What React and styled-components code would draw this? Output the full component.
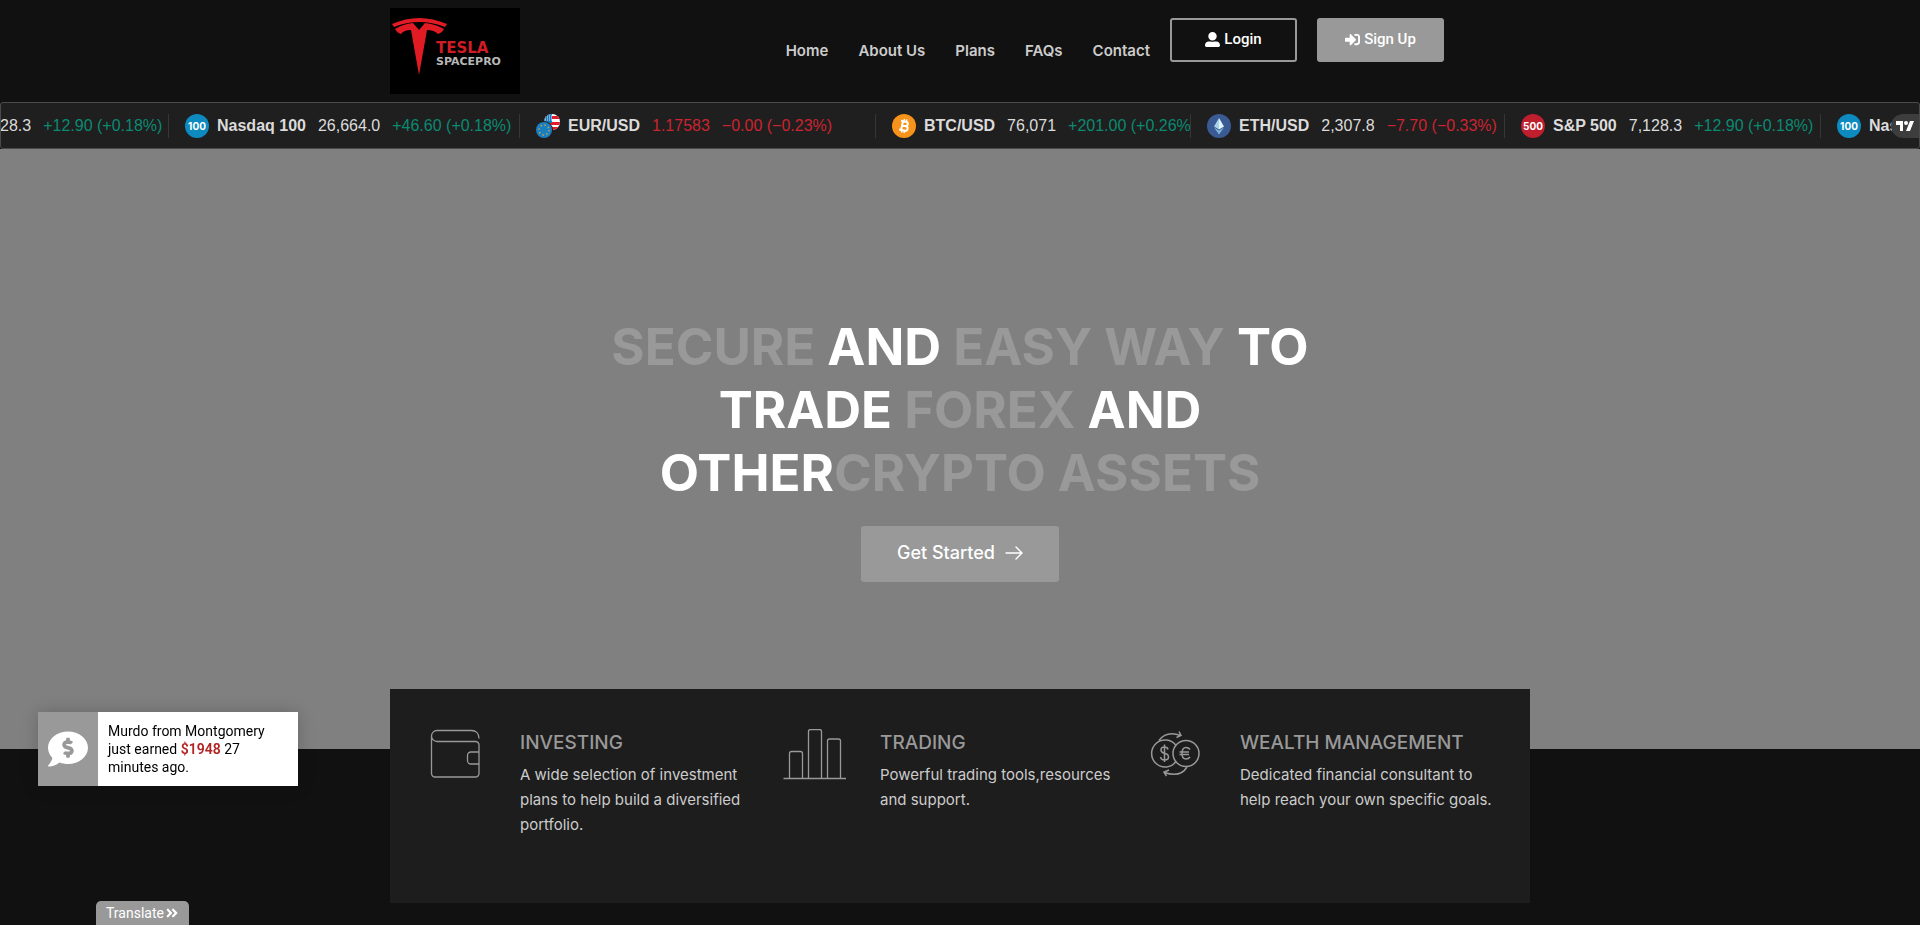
import React from 'react';
import styled, { createGlobalStyle } from 'styled-components';
import {
   FaUserAlt,
   FaSignInAlt,
   FaCommentDollar,
   FaAngleDoubleRight,
} from 'react-icons/fa';

const navLinks = ['Home', 'About Us', 'Plans', 'FAQs', 'Contact'];

const quotes = [
   { id: 'spx-1', icon: 'spx', name: 'S&P 500', price: '7,128.3', change: '+12.90 (+0.18%)', width: 315 },
   { id: 'ndx-1', icon: 'ndx', name: 'Nasdaq 100', price: '26,664.0', change: '+46.60 (+0.18%)', width: 351 },
   { id: 'eur', icon: 'eur', name: 'EUR/USD', price: '1.17583', change: '−0.00 (−0.23%)', width: 356, down: true, tinted: true },
   { id: 'btc', icon: 'btc', name: 'BTC/USD', price: '76,071', change: '+201.00 (+0.26%)', width: 315 },
   { id: 'eth', icon: 'eth', name: 'ETH/USD', price: '2,307.8', change: '−7.70 (−0.33%)', width: 314, down: true },
   { id: 'spx-2', icon: 'spx', name: 'S&P 500', price: '7,128.3', change: '+12.90 (+0.18%)', width: 316 },
   { id: 'ndx-2', icon: 'ndx', name: 'Nasdaq 100', price: '26,664.0', change: '+46.60 (+0.18%)', width: 351 },
];

const Logo = () => (
   <svg width='130' height='86' viewBox='0 0 130 86' role='img' aria-label='Tesla Spacepro'>
      <rect width='130' height='86' fill='#000' />
      <path fill='#e01b24' d='M2 16Q29 4 57 16L55 19Q29 9 4 19Z' />
      <path
         fill='#e01b24'
         d='M5 21Q13 16 23 15L29 22L35 15Q45 16 54 21Q52 25 48 26Q44 22 37 22L29 67L21 22Q14 22 11 26Q7 25 5 21Z'
      />
      <LogoText x='46' y='45' fill='#d01c24' $size={15}>TESLA</LogoText>
      <LogoText x='46' y='57' fill='#b8b8b8' $size={11}>SPACEPRO</LogoText>
   </svg>
);

const QuoteIcon = ({ type }) => {
   if (type === 'eur') {
      return (
         <CoinSvg width='24' height='24' viewBox='0 0 24 24' aria-hidden='true'>
            <defs>
               <clipPath id='usFlag'>
                  <circle cx='16' cy='8' r='8' />
               </clipPath>
            </defs>
            <g clipPath='url(#usFlag)'>
               <rect x='8' width='16' height='16' fill='#fff' />
               <path fill='#e01b2c' d='M8 2h16v3H8zM8 8h16v3H8zM8 13h16v3H8z' />
               <rect x='8' width='8' height='9' fill='#1779ba' />
               <path stroke='#cfe6f5' strokeDasharray='1 1' d='M9 2h7M9 4h7M9 6h7' />
            </g>
            <circle cx='8' cy='16' r='9' fill='#202020' />
            <circle cx='8' cy='16' r='8' fill='#1a7fc1' />
            <circle cx='8' cy='16' r='5' fill='none' stroke='#d9a33c' strokeWidth='1.4' strokeDasharray='1.4 2.5' />
         </CoinSvg>
      );
   }
   if (type === 'btc') {
      return (
         <CoinSvg width='24' height='24' viewBox='0 0 24 24' aria-hidden='true'>
            <circle cx='12' cy='12' r='12' fill='#f7931a' />
            <g fill='none' stroke='#fff' strokeWidth='2' transform='rotate(12 12 12)'>
               <path d='M8 7.5h5.2a2.1 2.1 0 0 1 0 4.3H9.8h4a2.3 2.3 0 0 1 0 4.7H8M10 7.5v9' />
               <path strokeWidth='1.4' d='M11 5v2.5M13.5 5v2.5M11 16.5v2.5M13.5 16.5v2.5' />
            </g>
         </CoinSvg>
      );
   }
   if (type === 'eth') {
      return (
         <CoinSvg width='24' height='24' viewBox='0 0 24 24' aria-hidden='true'>
            <circle cx='12' cy='12' r='12' fill='#3a5a94' />
            <path fill='#a9d3ea' d='M12 4L7 12.5L12 15.5Z' />
            <path fill='#e3f4fb' d='M12 4L17 12.5L12 15.5Z' />
            <path fill='#7fb3d5' d='M7 13.5L12 20.5L17 13.5L12 16.5Z' />
         </CoinSvg>
      );
   }
   return <RoundBadge $red={type === 'spx'}>{type === 'spx' ? '500' : '100'}</RoundBadge>;
};

const WalletIcon = () => (
   <svg width='50' height='50' viewBox='0 0 50 50' fill='none' stroke='#999' strokeWidth='1.3' aria-hidden='true'>
      <path d='M49 9.5C49 4.500 46 1.500 41.500 1.500H7A5.500 5.500 0 0 0 1.500 7V44.500A3.500 3.500 0 0 0 5 48H45.500A3.500 3.500 0 0 0 49 44.500V16A3.500 3.500 0 0 0 45.500 12.500H7A5.500 5.500 0 0 1 1.500 7' />
      <path d='M49 23H41A3.500 3.500 0 0 0 37.500 26.500V31.500A3.500 3.500 0 0 0 41 35H49' />
   </svg>
);

const BarsIcon = () => (
   <svg width='64' height='52' viewBox='0 1 64 52' fill='none' stroke='#999' strokeWidth='1.3' aria-hidden='true'>
      <path d='M0.5 50.5H63' />
      <path d='M6.5 50.5V25.5Q6.5 23.5 8.5 23.5H17.5Q19.5 23.5 19.5 25.5V50.5' />
      <path d='M25.5 50.5V3.5Q25.5 1.5 27.5 1.5H36.5Q38.5 1.5 38.5 3.5V50.5' />
      <path d='M44.5 50.5V13Q44.5 11 46.5 11H55.5Q57.5 11 57.5 13V50.5' />
   </svg>
);

const CoinsIcon = () => (
   <svg width='50' height='50' viewBox='0 0 50 50' fill='none' stroke='#999' strokeWidth='1.5' aria-hidden='true'>
      <circle cx='36' cy='24.5' r='13' />
      <path d='M26 16.5A13.5 13.500 0 1 0 26 32.500' />
      <path d='M9 11.5Q16.500 1.500 30.500 6.500M29 2.500L31 6.500L26.500 8.500' />
      <path d='M37 38Q30.500 49 14.500 43.500M19 41L14 43L16.500 47' />
      <path d='M18 20.5Q17.500 18 14.500 18Q11 18 11 21Q11 23.500 14.500 24.200Q18.500 25 18.500 28Q18.500 31 14.500 31Q11 31 10.500 28M14.500 15.500V33' />
      <path d='M40 20.5Q38.500 18.500 36 18.500Q32 18.500 32 24.500Q32 30 36 30Q38.500 30 40 28M29.500 23H39M29.500 25.500H39' />
   </svg>
);

const ArrowIcon = () => (
   <svg width='18' height='16' viewBox='0 0 18 16' fill='none' stroke='#fff' strokeWidth='1.4' strokeLinecap='round' aria-hidden='true'>
      <path d='M1 8H17M11 2L17 8L11 14' />
   </svg>
);

const services = [
   {
      title: 'INVESTING',
      text: 'A wide selection of investment plans to help build a diversified portfolio.',
      Icon: WalletIcon,
   },
   { title: 'TRADING', text: 'Powerful trading tools,resources and support.', Icon: BarsIcon },
   {
      title: 'WEALTH MANAGEMENT',
      text: 'Dedicated financial consultant to help reach your own specific goals.',
      Icon: CoinsIcon,
   },
];

const App = () => {
   return (
      <>
         <GlobalStyle />
         <Header>
            <HeaderInner>
               <LogoLink href='#home'>
                  <Logo />
               </LogoLink>
               <Nav>
                  {navLinks.map((label) => (
                     <NavLink key={label} href='#home'>{label}</NavLink>
                  ))}
               </Nav>
               <Actions>
                  <ActionLink href='#login'>
                     <FaUserAlt size={15} />
                     Login
                  </ActionLink>
                  <ActionLink href='#signup' $filled>
                     <FaSignInAlt size={15} />
                     Sign Up
                  </ActionLink>
               </Actions>
            </HeaderInner>
         </Header>

         <Ticker>
            <Track>
               {quotes.map((q) => (
                  <Quote key={q.id} href='#quote' $width={q.width}>
                     <QuoteIcon type={q.icon} />
                     <Symbol>{q.name}</Symbol>
                     <Price $down={q.tinted}>{q.price}</Price>
                     <Change $down={q.down}>{q.change}</Change>
                  </Quote>
               ))}
            </Track>
            <TickerBrand href='#quotes' aria-label='TradingView'>
               <svg width='18' height='10' viewBox='0 0 18 10' fill='#fff' aria-hidden='true'>
                  <path d='M0 0H7V10H4V4H0Z' />
                  <circle cx='10' cy='2' r='2' />
                  <path d='M14 0H18L14 10H10Z' />
               </svg>
            </TickerBrand>
         </Ticker>

         <main>
            <Hero>
               <Title>
                  <Muted>SECURE</Muted> AND <Muted>EASY WAY</Muted> TO TRADE <Muted>FOREX</Muted> AND
                  {' '}OTHER<Muted>CRYPTO ASSETS</Muted>
               </Title>
               <StartLink href='#signup'>
                  Get Started
                  <ArrowIcon />
               </StartLink>
            </Hero>
            <Services>
               {services.map(({ title, text, Icon }) => (
                  <Service key={title}>
                     <ServiceIcon>
                        <Icon />
                     </ServiceIcon>
                     <div>
                        <ServiceTitle>{title}</ServiceTitle>
                        <ServiceText>{text}</ServiceText>
                     </div>
                  </Service>
               ))}
            </Services>
         </main>

         <Toast role='status'>
            <ToastIcon>
               <FaCommentDollar size={40} />
            </ToastIcon>
            <ToastText>
               Murdo from Montgomery just earned <Amount>$1948</Amount> 27 minutes ago.
            </ToastText>
         </Toast>

         <TranslateButton type='button'>
            Translate
            <FaAngleDoubleRight size={14} />
         </TranslateButton>
      </>
   );
};

export default App;


const GlobalStyle = createGlobalStyle`
   * {
      box-sizing: border-box;
   }

   body {
      margin: 0;
      background: #111;
      color: #ccc;
      font-family: Inter, sans-serif;
      overflow-x: hidden;
   }

   a {
      text-decoration: none;
   }
`;

const LogoText = styled.text`
   font-family: 'DejaVu Sans', sans-serif;
   font-size: ${(props) => props.$size}px;
   font-weight: 700;
`;

const CoinSvg = styled.svg`
   flex: none;
`;

const Header = styled.header`
   background: #111;
`;

const HeaderInner = styled.div`
   display: flex;
   align-items: center;
   max-width: 1140px;
   margin: 0 auto;
   padding: 8px 86px 8px 0;
`;

const LogoLink = styled.a`
   display: flex;
`;

const Nav = styled.nav`
   display: flex;
   gap: 30px;
   margin: 0 20px 0 auto;
`;

const NavLink = styled.a`
   color: #ccc;
   font-size: 15px;
   font-weight: 600;
   line-height: 20px;
`;

const Actions = styled.div`
   display: flex;
   align-self: flex-start;
   gap: 20px;
   padding-top: 10px;
`;

const ActionLink = styled.a`
   display: flex;
   justify-content: center;
   align-items: center;
   gap: 4px;
   width: 127px;
   height: 44px;
   padding-bottom: 2px;
   border: 2px solid #999;
   border-radius: 3px;
   background: ${(props) => (props.$filled ? '#999' : 'transparent')};
   color: #fff;
   font-family: Roboto, sans-serif;
   font-size: 15px;
   font-weight: 500;
`;

const Ticker = styled.section`
   position: relative;
   height: 47px;
   border: 1px solid #4a4a4a;
   border-radius: 3px;
   background: #1f1f1f;
   overflow: hidden;
`;

const Track = styled.div`
   display: flex;
   align-items: center;
   height: 100%;
   margin-left: -148px;
`;

const Quote = styled.a`
   display: flex;
   align-items: center;
   flex: none;
   width: ${(props) => props.$width}px;
   height: 24px;
   padding-left: 16px;
   border-left: 1px solid #363636;
   color: #dbdbdb;
   font-family: 'Liberation Sans', sans-serif;
   font-size: 16px;
   line-height: 24px;
   white-space: nowrap;
   overflow: hidden;
`;

const RoundBadge = styled.span`
   flex: none;
   width: 24px;
   height: 24px;
   border-radius: 50%;
   background: ${(props) => (props.$red ? '#be1e2d' : '#0d8bc1')};
   color: #fff;
   font-family: Inter, sans-serif;
   font-size: 10px;
   font-weight: 700;
   text-align: center;
`;

const Symbol = styled.strong`
   margin-left: 8px;
`;

const Price = styled.span`
   margin-left: 12px;
   color: ${(props) => (props.$down ? '#cc2430' : '#dbdbdb')};
`;

const Change = styled.span`
   margin-left: 12px;
   color: ${(props) => (props.$down ? '#cc2430' : '#0b8a72')};
`;

const TickerBrand = styled.a`
   position: absolute;
   top: 11px;
   right: 0;
   display: flex;
   align-items: center;
   width: 28px;
   height: 24px;
   padding-left: 5px;
   border-radius: 12px 0 0 12px;
   background: #3d3d3d;
`;

const Hero = styled.section`
   display: flex;
   flex-direction: column;
   justify-content: center;
   align-items: center;
   gap: 22px;
   min-height: 600px;
   padding-bottom: 2px;
   background: #808080;
`;

const Title = styled.h1`
   max-width: 750px;
   margin: 0;
   color: #fff;
   font-size: 51px;
   font-weight: 700;
   line-height: 63px;
   text-align: center;
`;

const Muted = styled.span`
   color: #999;
`;

const StartLink = styled.a`
   display: flex;
   justify-content: center;
   align-items: center;
   gap: 10px;
   height: 56px;
   padding: 0 36px 2px;
   border-radius: 3px;
   background: #999;
   color: #fff;
   font-size: 18px;
   font-weight: 500;
`;

const Services = styled.section`
   position: relative;
   display: grid;
   grid-template-columns: repeat(3, 1fr);
   max-width: 1140px;
   min-height: 214px;
   margin: -60px auto 22px;
   padding: 40px 30px;
   background: #1d1d1d;
`;

const Service = styled.article`
   display: grid;
   grid-template-columns: 70px 1fr;
   gap: 30px;
`;

const ServiceIcon = styled.div`
   display: flex;
   justify-content: center;
   align-items: flex-start;
`;

const ServiceTitle = styled.h2`
   margin: 0 0 5px;
   color: #999;
   font-size: 19px;
   font-weight: 500;
   line-height: 28px;
`;

const ServiceText = styled.p`
   max-width: 254px;
   margin: 0;
   color: #ccc;
   font-size: 15px;
   line-height: 25px;
`;

const Toast = styled.div`
   position: fixed;
   bottom: 139px;
   left: 38px;
   display: flex;
   width: 260px;
   background: #fff;
   box-shadow: 0 0 16px rgba(0, 0, 0, 0.2);
   color: #000;
   font-family: Roboto, sans-serif;
   font-size: 14px;
   line-height: 18px;
`;

const ToastIcon = styled.div`
   display: flex;
   justify-content: center;
   align-items: center;
   flex: none;
   width: 60px;
   background: #999;
   color: #fff;
`;

const ToastText = styled.p`
   margin: 0;
   padding: 10px;
`;

const Amount = styled.strong`
   color: #b22222;
   font-weight: 600;
`;

const TranslateButton = styled.button`
   position: fixed;
   bottom: 0;
   left: 96px;
   display: flex;
   align-items: center;
   gap: 1px;
   height: 24px;
   padding: 0 10px;
   border: 0;
   border-radius: 5px 5px 0 0;
   background: #999;
   color: #fff;
   font-family: Roboto, sans-serif;
   font-size: 14px;
`;
